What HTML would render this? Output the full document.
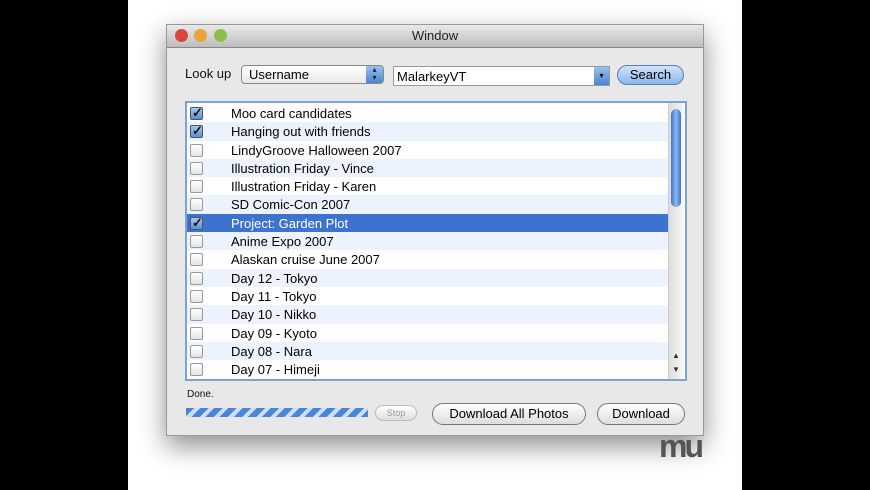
<!DOCTYPE html><html><head><style>
body{margin:0;width:870px;height:490px;background:#000;position:relative;overflow:hidden;font-family:"Liberation Sans",sans-serif;}
.bg{position:absolute;left:128px;top:0;width:614px;height:490px;background:#fff;}
.win{position:absolute;left:166px;top:24px;width:538px;height:412px;background:#e8e8e8;box-shadow:0 10px 25px rgba(0,0,0,.45);border:1px solid #999;box-sizing:border-box;}
.title{height:22px;background:linear-gradient(#e9e9e9,#bdbdbd);border-bottom:1px solid #888;text-align:center;font-size:13px;line-height:22px;color:#222;}
.dot{position:absolute;top:4px;width:13px;height:13px;border-radius:50%;}
.abs{position:absolute;font-size:13px;color:#111;}
.list{position:absolute;left:18px;top:76px;width:502px;height:280px;border:2px solid #7aa4d6;background:#fff;overflow:hidden;box-sizing:border-box;padding-top:1px;}
.row{height:18.3px;line-height:20px;font-size:13px;position:relative;}
.row:nth-child(even){background:#edf3fe;}
.row.sel{background:#3d73cf;color:#fff;}
.cb{position:absolute;left:3px;top:3px;width:11px;height:11px;border:1px solid #999;border-radius:2px;background:linear-gradient(#fff,#e4e4e4);}
.cb.on{background:linear-gradient(#a8c8ee,#5b8fd0);border-color:#456;}
.cb.on:after{content:"✓";position:absolute;left:1px;top:-5px;font-size:13px;color:#111;font-weight:bold;}
.t{position:absolute;left:44px;}
.btn{position:absolute;border:1px solid #777;border-radius:11px;background:linear-gradient(#fff,#ddd);text-align:center;font-size:13px;box-sizing:border-box;}
</style></head><body>
<div class="bg"></div>
<div class="win">
<div class="title">Window</div>
<div class="dot" style="left:8px;background:#d9473a"></div>
<div class="dot" style="left:27px;background:#e9a43a"></div>
<div class="dot" style="left:47px;background:#8cbf4a"></div>
<div class="abs" style="left:18px;top:41px">Look up</div>
<div style="position:absolute;left:74px;top:40px;width:143px;height:19px;border:1px solid #888;border-radius:4px;background:linear-gradient(#fff,#e8e8e8);box-sizing:border-box;font-size:13px;line-height:17px;padding-left:7px">Username<div style="position:absolute;right:0;top:0;width:17px;height:17px;background:linear-gradient(#9cc0ee,#4a84d2);border-radius:0 3px 3px 0;color:#123;font-size:8px;line-height:8px;text-align:center">▴<br>▾</div></div>
<div style="position:absolute;left:226px;top:41px;width:217px;height:20px;border:1px solid #999;background:#fff;box-sizing:border-box;font-size:13px;line-height:19px;padding-left:3px">MalarkeyVT<div style="position:absolute;right:0;top:0;width:15px;height:18px;background:linear-gradient(#9cc0ee,#4a84d2);font-size:8px;line-height:18px;text-align:center">▾</div></div>
<div class="btn" style="left:450px;top:40px;width:67px;height:20px;line-height:18px;background:linear-gradient(#d0e4fb,#8bb6ec);border-color:#5a7fb0">Search</div>
<div class="list">
<div class="row"><div class="cb on"></div><span class="t">Moo card candidates</span></div>
<div class="row"><div class="cb on"></div><span class="t">Hanging out with friends</span></div>
<div class="row"><div class="cb"></div><span class="t">LindyGroove Halloween 2007</span></div>
<div class="row"><div class="cb"></div><span class="t">Illustration Friday - Vince</span></div>
<div class="row"><div class="cb"></div><span class="t">Illustration Friday - Karen</span></div>
<div class="row"><div class="cb"></div><span class="t">SD Comic-Con 2007</span></div>
<div class="row sel"><div class="cb on"></div><span class="t">Project: Garden Plot</span></div>
<div class="row"><div class="cb"></div><span class="t">Anime Expo 2007</span></div>
<div class="row"><div class="cb"></div><span class="t">Alaskan cruise June 2007</span></div>
<div class="row"><div class="cb"></div><span class="t">Day 12 - Tokyo</span></div>
<div class="row"><div class="cb"></div><span class="t">Day 11 - Tokyo</span></div>
<div class="row"><div class="cb"></div><span class="t">Day 10 - Nikko</span></div>
<div class="row"><div class="cb"></div><span class="t">Day 09 - Kyoto</span></div>
<div class="row"><div class="cb"></div><span class="t">Day 08 - Nara</span></div>
<div class="row"><div class="cb"></div><span class="t">Day 07 - Himeji</span></div>
<div style="position:absolute;right:0;top:0;width:16px;height:276px;background:linear-gradient(90deg,#ddd,#fafafa);border-left:1px solid #ccc">
<div style="position:absolute;left:2px;top:6px;width:10px;height:98px;border-radius:6px;background:linear-gradient(90deg,#3d75c8,#8db8ee,#3d75c8)"></div>
<div style="position:absolute;left:3px;top:246px;font-size:8px;line-height:14px;color:#333">▲<br>▼</div></div>
</div>
<div class="abs" style="left:20px;top:364px;font-size:10px">Done.</div>
<div style="position:absolute;left:19px;top:383px;width:182px;height:9px;background:repeating-linear-gradient(135deg,#4a86d8 0 6px,#cfe0f6 6px 10px);"></div>
<div class="btn" style="left:208px;top:380px;width:42px;height:16px;line-height:14px;font-size:9px;color:#999;border-color:#bbb">Stop</div>
<div class="btn" style="left:265px;top:378px;width:154px;height:22px;line-height:20px">Download All Photos</div>
<div class="btn" style="left:430px;top:378px;width:88px;height:22px;line-height:20px">Download</div>
</div>
<div style="position:absolute;left:659px;top:428px;font-size:32px;font-weight:bold;color:#555;letter-spacing:-3px">mu</div>
</body></html>
